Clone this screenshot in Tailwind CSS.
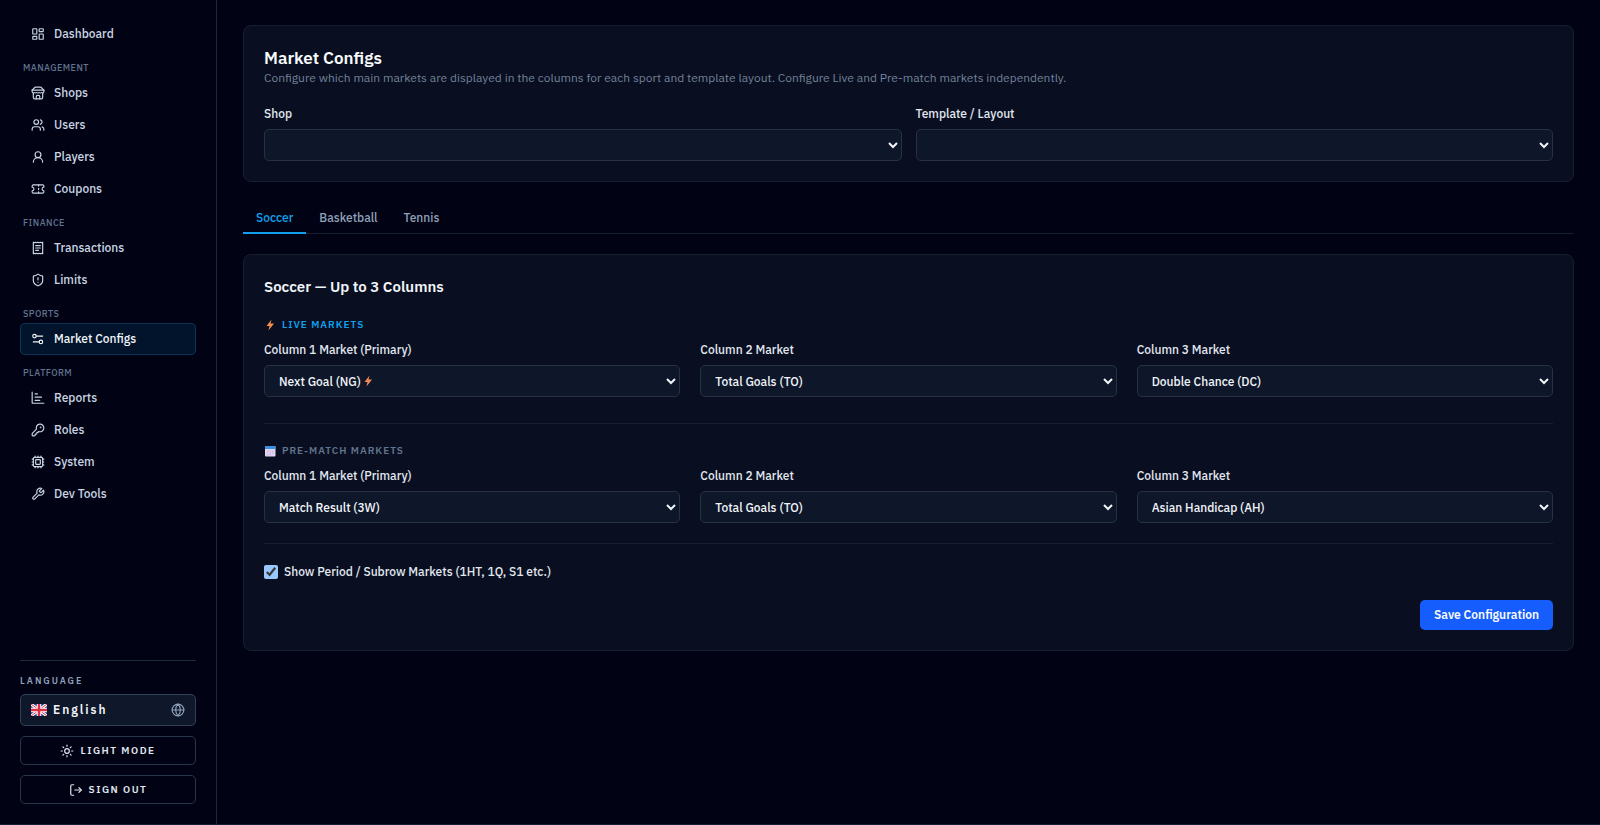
<!DOCTYPE html>
<html lang="en">

<head>
    <meta charset="UTF-8">
    <meta name="viewport" content="width=device-width, initial-scale=1.0">
    <title>Market Configs</title>
    <script src="https://cdn.jsdelivr.net/npm/@tailwindcss/browser@4"></script>
</head>

<body class="scheme-dark flex min-h-screen border-b border-slate-800/70 bg-[#010315] font-['IBM_Plex_Sans',Roboto,sans-serif] text-xs leading-4 text-slate-200">

    <!-- Sidebar -->
    <aside class="flex w-[217px] shrink-0 flex-col border-r border-slate-800 px-5 pt-[18px] pb-5">
        <nav class="flex flex-col font-medium text-slate-300">
            <a href="#" class="flex h-8 items-center gap-[9px] rounded-[5px] px-[11px]">
                <svg class="size-3.5" viewBox="0 0 24 24" fill="none" stroke="currentColor" stroke-width="2" stroke-linecap="round" stroke-linejoin="round"><rect x="3" y="3" width="7" height="9" rx="1" /><rect x="14" y="3" width="7" height="5" rx="1" /><rect x="14" y="12" width="7" height="9" rx="1" /><rect x="3" y="16" width="7" height="5" rx="1" /></svg>
                Dashboard
            </a>

            <h3 class="px-[3px] pt-2.5 pb-px text-[9px] tracking-wider text-slate-500">MANAGEMENT</h3>
            <a href="#" class="flex h-8 items-center gap-[9px] rounded-[5px] px-[11px]">
                <svg class="size-3.5" viewBox="0 0 24 24" fill="none" stroke="currentColor" stroke-width="2" stroke-linecap="round" stroke-linejoin="round"><path d="m2 7 4.41-4.41A2 2 0 0 1 7.83 2h8.34a2 2 0 0 1 1.42.59L22 7" /><path d="M4 12v8a2 2 0 0 0 2 2h12a2 2 0 0 0 2-2v-8" /><path d="M15 22v-4a2 2 0 0 0-2-2h-2a2 2 0 0 0-2 2v4" /><path d="M2 7h20" /><path d="M22 7v3a2 2 0 0 1-2 2 2.7 2.7 0 0 1-1.59-.63.7.7 0 0 0-.82 0A2.7 2.7 0 0 1 16 12a2.7 2.7 0 0 1-1.59-.63.7.7 0 0 0-.82 0A2.7 2.7 0 0 1 12 12a2.7 2.7 0 0 1-1.59-.63.7.7 0 0 0-.82 0A2.7 2.7 0 0 1 8 12a2.7 2.7 0 0 1-1.59-.63.7.7 0 0 0-.82 0A2.7 2.7 0 0 1 4 12a2 2 0 0 1-2-2V7" /></svg>
                Shops
            </a>
            <a href="#" class="flex h-8 items-center gap-[9px] rounded-[5px] px-[11px]">
                <svg class="size-3.5" viewBox="0 0 24 24" fill="none" stroke="currentColor" stroke-width="2" stroke-linecap="round" stroke-linejoin="round"><path d="M16 21v-2a4 4 0 0 0-4-4H6a4 4 0 0 0-4 4v2" /><circle cx="9" cy="7" r="4" /><path d="M22 21v-2a4 4 0 0 0-3-3.87" /><path d="M16 3.13a4 4 0 0 1 0 7.75" /></svg>
                Users
            </a>
            <a href="#" class="flex h-8 items-center gap-[9px] rounded-[5px] px-[11px]">
                <svg class="size-3.5" viewBox="0 0 24 24" fill="none" stroke="currentColor" stroke-width="2" stroke-linecap="round" stroke-linejoin="round"><circle cx="12" cy="8" r="5" /><path d="M20 21a8 8 0 0 0-16 0" /></svg>
                Players
            </a>
            <a href="#" class="flex h-8 items-center gap-[9px] rounded-[5px] px-[11px]">
                <svg class="size-3.5" viewBox="0 0 24 24" fill="none" stroke="currentColor" stroke-width="2" stroke-linecap="round" stroke-linejoin="round"><path d="M2 9a3 3 0 0 1 0 6v2a2 2 0 0 0 2 2h16a2 2 0 0 0 2-2v-2a3 3 0 0 1 0-6V7a2 2 0 0 0-2-2H4a2 2 0 0 0-2 2Z" /><path d="M13 5v2" /><path d="M13 17v2" /><path d="M13 11v2" /></svg>
                Coupons
            </a>

            <h3 class="px-[3px] pt-2.5 pb-px text-[9px] tracking-wider text-slate-500">FINANCE</h3>
            <a href="#" class="flex h-8 items-center gap-[9px] rounded-[5px] px-[11px]">
                <svg class="size-3.5" viewBox="0 0 24 24" fill="none" stroke="currentColor" stroke-width="2" stroke-linecap="round" stroke-linejoin="round"><path d="M4 2v20l2-1 2 1 2-1 2 1 2-1 2 1 2-1 2 1V2l-2 1-2-1-2 1-2-1-2 1-2-1-2 1Z" /><path d="M8 8h8" /><path d="M8 12h8" /><path d="M8 16h5" /></svg>
                Transactions
            </a>
            <a href="#" class="flex h-8 items-center gap-[9px] rounded-[5px] px-[11px]">
                <svg class="size-3.5" viewBox="0 0 24 24" fill="none" stroke="currentColor" stroke-width="2" stroke-linecap="round" stroke-linejoin="round"><path d="M20 13c0 5-3.5 7.5-7.66 8.95a1 1 0 0 1-.67-.01C7.5 20.5 4 18 4 13V6a1 1 0 0 1 1-1c2 0 4.5-1.2 6.24-2.72a1.17 1.17 0 0 1 1.52 0C14.51 3.81 17 5 19 5a1 1 0 0 1 1 1z" /><path d="M12 8v4" /><path d="M12 16h.01" /></svg>
                Limits
            </a>

            <h3 class="px-[3px] pt-2.5 pb-px text-[9px] tracking-wider text-slate-500">SPORTS</h3>
            <a href="#" aria-current="page" class="flex h-8 items-center gap-[9px] rounded-[5px] bg-[#02142b] px-[11px] text-slate-100 inset-ring inset-ring-[#0b3552]">
                <svg class="size-3.5" viewBox="0 0 24 24" fill="none" stroke="currentColor" stroke-width="2" stroke-linecap="round" stroke-linejoin="round"><path d="M9 7h11" /><path d="M4 17h10" /><circle cx="6" cy="7" r="3" /><circle cx="17" cy="17" r="3" /></svg>
                Market Configs
            </a>

            <h3 class="px-[3px] pt-2.5 pb-px text-[9px] tracking-wider text-slate-500">PLATFORM</h3>
            <a href="#" class="flex h-8 items-center gap-[9px] rounded-[5px] px-[11px]">
                <svg class="size-3.5" viewBox="0 0 24 24" fill="none" stroke="currentColor" stroke-width="2" stroke-linecap="round" stroke-linejoin="round"><path d="M2 2v18a1 1 0 0 0 1 1h19" /><path d="M7 5h4" /><path d="M7 10.5h11" /><path d="M7 16h8" /></svg>
                Reports
            </a>
            <a href="#" class="flex h-8 items-center gap-[9px] rounded-[5px] px-[11px]">
                <svg class="size-3.5" viewBox="0 0 24 24" fill="none" stroke="currentColor" stroke-width="2" stroke-linecap="round" stroke-linejoin="round"><path d="M2.586 17.414A2 2 0 0 0 2 18.828V21a1 1 0 0 0 1 1h3a1 1 0 0 0 1-1v-1a1 1 0 0 1 1-1h1a1 1 0 0 0 1-1v-1a1 1 0 0 1 1-1h.172a2 2 0 0 0 1.414-.586l.814-.814a6.5 6.5 0 1 0-4-4z" /><circle cx="16.5" cy="7.5" r=".5" fill="currentColor" /></svg>
                Roles
            </a>
            <a href="#" class="flex h-8 items-center gap-[9px] rounded-[5px] px-[11px]">
                <svg class="size-3.5" viewBox="0 0 24 24" fill="none" stroke="currentColor" stroke-width="2" stroke-linecap="round" stroke-linejoin="round"><rect x="4" y="4" width="16" height="16" rx="2" /><rect x="8" y="8" width="8" height="8" rx="1" /><path d="M12 20v2M12 2v2M17 20v2M17 2v2M2 12h2M2 17h2M2 7h2M20 12h2M20 17h2M20 7h2M7 20v2M7 2v2" /></svg>
                System
            </a>
            <a href="#" class="flex h-8 items-center gap-[9px] rounded-[5px] px-[11px]">
                <svg class="size-3.5" viewBox="0 0 24 24" fill="none" stroke="currentColor" stroke-width="2" stroke-linecap="round" stroke-linejoin="round"><path d="M14.7 6.3a1 1 0 0 0 0 1.4l1.6 1.6a1 1 0 0 0 1.4 0l3.77-3.77a6 6 0 0 1-7.94 7.94l-6.91 6.91a2.12 2.12 0 0 1-3-3l6.91-6.91a6 6 0 0 1 7.94-7.94l-3.76 3.76z" /></svg>
                Dev Tools
            </a>
        </nav>

        <!-- Language, theme and session -->
        <div class="mt-auto flex flex-col gap-2.5 border-t border-slate-800 pt-3">
            <h3 class="-mb-[5px] text-[9px] font-semibold tracking-[2px] text-slate-400">LANGUAGE</h3>
            <button type="button" class="flex h-8 items-center gap-1.5 rounded-[5px] border border-slate-700 bg-[#0f172a] px-2.5 font-semibold tracking-[2px] text-slate-100">
                <svg class="h-3 w-4" viewBox="0 0 32 24"><rect width="32" height="24" rx="2" fill="#1f3f94" /><path d="M0 0 32 24M32 0 0 24" stroke="#fff" stroke-width="6" /><path d="M0 0 32 24M32 0 0 24" stroke="#dd2f45" stroke-width="2" /><path d="M16 0v24M0 12h32" stroke="#fff" stroke-width="9" /><path d="M16 0v24M0 12h32" stroke="#dd2f45" stroke-width="5" /></svg>
                English
                <svg class="ml-auto size-3.5 text-slate-400" viewBox="0 0 24 24" fill="none" stroke="currentColor" stroke-width="2" stroke-linecap="round" stroke-linejoin="round"><circle cx="12" cy="12" r="10" /><path d="M12 2a14.5 14.5 0 0 0 0 20 14.5 14.5 0 0 0 0-20" /><path d="M2 12h20" /></svg>
            </button>
            <button type="button" class="flex h-[29px] items-center justify-center gap-1.5 rounded-[5px] border border-slate-700/80 text-[10px] font-semibold tracking-[1.5px]">
                <svg class="size-3.5" viewBox="0 0 24 24" fill="none" stroke="currentColor" stroke-width="2" stroke-linecap="round" stroke-linejoin="round"><circle cx="12" cy="12" r="4" /><path d="M12 2v2M12 20v2M4.93 4.93l1.41 1.41M17.66 17.66l1.41 1.41M2 12h2M20 12h2M6.34 17.66l-1.41 1.41M19.07 4.93l-1.41 1.41" /></svg>
                LIGHT MODE
            </button>
            <button type="button" class="flex h-[29px] items-center justify-center gap-1.5 rounded-[5px] border border-slate-700/80 text-[10px] font-semibold tracking-[1.5px]">
                <svg class="size-3.5" viewBox="0 0 24 24" fill="none" stroke="currentColor" stroke-width="2" stroke-linecap="round" stroke-linejoin="round"><path d="M8 21H5a2 2 0 0 1-2-2V5a2 2 0 0 1 2-2h3" /><path d="m17 16 4-4-4-4" /><path d="M21 12H10" /></svg>
                SIGN OUT
            </button>
        </div>
    </aside>

    <!-- Main Content -->
    <main class="flex-1 px-[26px] py-[25px]">
        <section class="rounded-lg border border-[#161e32] bg-[#090f21] px-5 pt-[22px] pb-5">
            <h1 class="text-[17px] leading-5 font-semibold text-slate-50">Market Configs</h1>
            <p class="leading-5 text-slate-400/80">Configure which main markets are displayed in the columns for each sport and template layout. Configure Live and Pre-match markets independently.</p>
            <div class="mt-[18px] grid grid-cols-2 gap-[14px]">
                <div>
                    <label for="shop" class="block font-medium">Shop</label>
                    <select id="shop" class="mt-[7px] h-8 w-full rounded-[5px] border border-[#283143] bg-[#0e1629] px-2.5 font-medium text-slate-100"></select>
                </div>
                <div>
                    <label for="template" class="block font-medium">Template / Layout</label>
                    <select id="template" class="mt-[7px] h-8 w-full rounded-[5px] border border-[#283143] bg-[#0e1629] px-2.5 font-medium text-slate-100"></select>
                </div>
            </div>
        </section>

        <!-- Sport tabs -->
        <div class="mt-[18px] flex border-b border-[#161e32] font-medium text-slate-400" role="tablist">
            <button type="button" role="tab" aria-selected="true" class="-mb-px h-[34px] border-b-2 border-[#12a0ec] px-[13px] pt-[3px] text-[#12a0ec]">Soccer</button>
            <button type="button" role="tab" class="-mb-px h-[34px] border-b-2 border-transparent px-[13px] pt-[3px]">Basketball</button>
            <button type="button" role="tab" class="-mb-px h-[34px] border-b-2 border-transparent px-[13px] pt-[3px]">Tennis</button>
        </div>

        <section class="mt-5 rounded-lg border border-[#161e32] bg-[#090f21] p-5">
            <h2 class="text-[15px] leading-6 font-semibold text-slate-100">Soccer — Up to 3 Columns</h2>

            <h3 class="mt-[18px] flex items-center gap-1.5 text-[10px] font-semibold tracking-[1px] text-[#12a0ec]">
                <svg class="h-3 w-3" viewBox="0 0 24 24"><path d="M15 1 5 14h6l-2 9L20 9h-7z" fill="#f58b51" /></svg>
                LIVE MARKETS
            </h3>
            <div class="mt-[9px] grid grid-cols-3 gap-5">
                <div>
                    <label for="live-1" class="block font-medium">Column 1 Market (Primary)</label>
                    <div class="relative mt-[7px]">
                        <select id="live-1" class="h-8 w-full rounded-[5px] border border-[#283143] bg-[#0e1629] px-2.5 font-medium text-slate-100"><option>Next Goal (NG)</option></select>
                        <svg class="pointer-events-none absolute top-2.5 left-[98px] size-3" viewBox="0 0 24 24"><path d="M15 1 5 14h6l-2 9L20 9h-7z" fill="#f58b51" /></svg>
                    </div>
                </div>
                <div>
                    <label for="live-2" class="block font-medium">Column 2 Market</label>
                    <select id="live-2" class="mt-[7px] h-8 w-full rounded-[5px] border border-[#283143] bg-[#0e1629] px-2.5 font-medium text-slate-100"><option>Total Goals (TO)</option></select>
                </div>
                <div>
                    <label for="live-3" class="block font-medium">Column 3 Market</label>
                    <select id="live-3" class="mt-[7px] h-8 w-full rounded-[5px] border border-[#283143] bg-[#0e1629] px-2.5 font-medium text-slate-100"><option>Double Chance (DC)</option></select>
                </div>
            </div>

            <h3 class="mt-[26px] flex items-center gap-1.5 border-t border-[#161e32] pt-[19px] text-[10px] font-semibold tracking-[1px] text-slate-500">
                <svg class="h-3 w-3" viewBox="0 0 24 24"><rect x="2" y="2" width="21" height="21" rx="2" fill="#e2d6f2" /><path d="M2 4a2 2 0 0 1 2-2h17a2 2 0 0 1 2 2v4H2z" fill="#3b8fe0" /><path d="M6 12h13M6 16h13M6 20h9" stroke="#b9a7d6" stroke-width="1.5" stroke-dasharray="3 2" /></svg>
                PRE-MATCH MARKETS
            </h3>
            <div class="mt-[9px] grid grid-cols-3 gap-5">
                <div>
                    <label for="pre-1" class="block font-medium">Column 1 Market (Primary)</label>
                    <select id="pre-1" class="mt-[7px] h-8 w-full rounded-[5px] border border-[#283143] bg-[#0e1629] px-2.5 font-medium text-slate-100"><option>Match Result (3W)</option></select>
                </div>
                <div>
                    <label for="pre-2" class="block font-medium">Column 2 Market</label>
                    <select id="pre-2" class="mt-[7px] h-8 w-full rounded-[5px] border border-[#283143] bg-[#0e1629] px-2.5 font-medium text-slate-100"><option>Total Goals (TO)</option></select>
                </div>
                <div>
                    <label for="pre-3" class="block font-medium">Column 3 Market</label>
                    <select id="pre-3" class="mt-[7px] h-8 w-full rounded-[5px] border border-[#283143] bg-[#0e1629] px-2.5 font-medium text-slate-100"><option>Asian Handicap (AH)</option></select>
                </div>
            </div>

            <div class="mt-5 border-t border-[#161e32] pt-5">
                <label class="flex items-center gap-1.5 font-medium">
                    <input type="checkbox" checked class="size-3.5">
                    Show Period / Subrow Markets (1HT, 1Q, S1 etc.)
                </label>
            </div>
            <div class="mt-5 flex justify-end">
                <button type="button" class="h-[30px] rounded-[5px] bg-[#155dfc] px-3.5 font-semibold text-slate-50">Save Configuration</button>
            </div>
        </section>
    </main>

</body>

</html>
